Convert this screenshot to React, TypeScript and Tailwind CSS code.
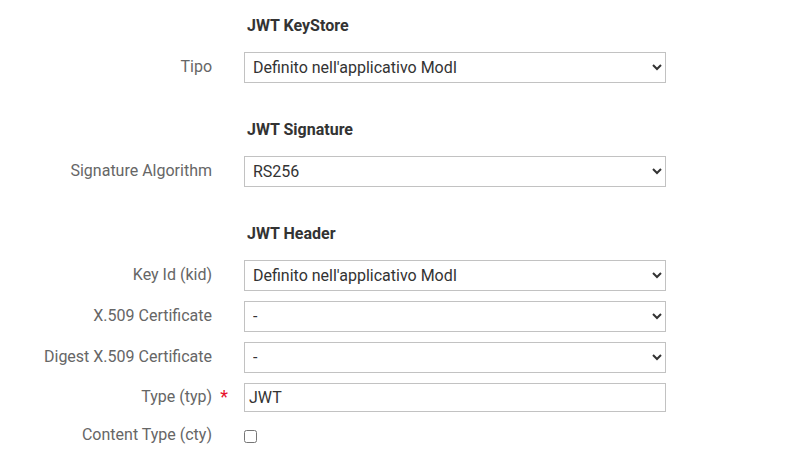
const font = { fontFamily: 'Roboto, "Liberation Sans", sans-serif' }

const Heading = ({ title }: { title: string }) => (
  <div className="flex gap-8">
    <div className="w-[212px] shrink-0" />
    <h3 className="h-5 pl-[3px] pt-px text-[16px] leading-5 font-bold text-[#333333]">{title}</h3>
  </div>
)

const Row = ({ label, required, children, className = '' }: { label: string; required?: boolean; children: React.ReactNode; className?: string }) => (
  <div className={`flex items-center gap-8 ${className}`}>
    <label className="relative w-[212px] shrink-0 pb-[2px] text-right text-[16px] leading-5 text-[#666666]">
      {label}
      {required && <span className="absolute -right-[16px] top-0 text-[18px] text-[#e8112d]">*</span>}
    </label>
    {children}
  </div>
)

const Select = ({ value }: { value: string }) => (
  <select
    defaultValue={value}
    className="h-[31px] w-[422px] border border-[#c2c2c2] bg-white pl-1 text-[16px] text-[#333333] outline-none"
    style={{ appearance: 'auto' }}
  >
    <option>{value}</option>
  </select>
)

export default function App() {
  return (
    <div className="min-h-[463px] w-[804px] bg-white pt-[15px]" style={font}>
      <Heading title="JWT KeyStore" />
      <div className="mt-[17px] flex flex-col gap-[10px]">
        <Row label="Tipo">
          <Select value="Definito nell'applicativo ModI" />
        </Row>
      </div>

      <div className="mt-9">
        <Heading title="JWT Signature" />
      </div>
      <div className="mt-[17px] flex flex-col gap-[10px]">
        <Row label="Signature Algorithm">
          <Select value="RS256" />
        </Row>
      </div>

      <div className="mt-9">
        <Heading title="JWT Header" />
      </div>
      <div className="mt-[17px] flex flex-col gap-[10px]">
        <Row label="Key Id (kid)">
          <Select value="Definito nell'applicativo ModI" />
        </Row>
        <Row label="X.509 Certificate">
          <Select value="-" />
        </Row>
        <Row label="Digest X.509 Certificate">
          <Select value="-" />
        </Row>
        <Row label="Type (typ)" required>
          <input
            defaultValue="JWT"
            className="h-[29px] w-[422px] border border-[#c2c2c2] bg-white px-1 text-[16px] text-[#333333] outline-none"
          />
        </Row>
        <Row label="Content Type (cty)" className="h-7">
          <input type="checkbox" className="h-[13px] w-[13px]" style={{ appearance: 'auto' }} />
        </Row>
      </div>
    </div>
  )
}
